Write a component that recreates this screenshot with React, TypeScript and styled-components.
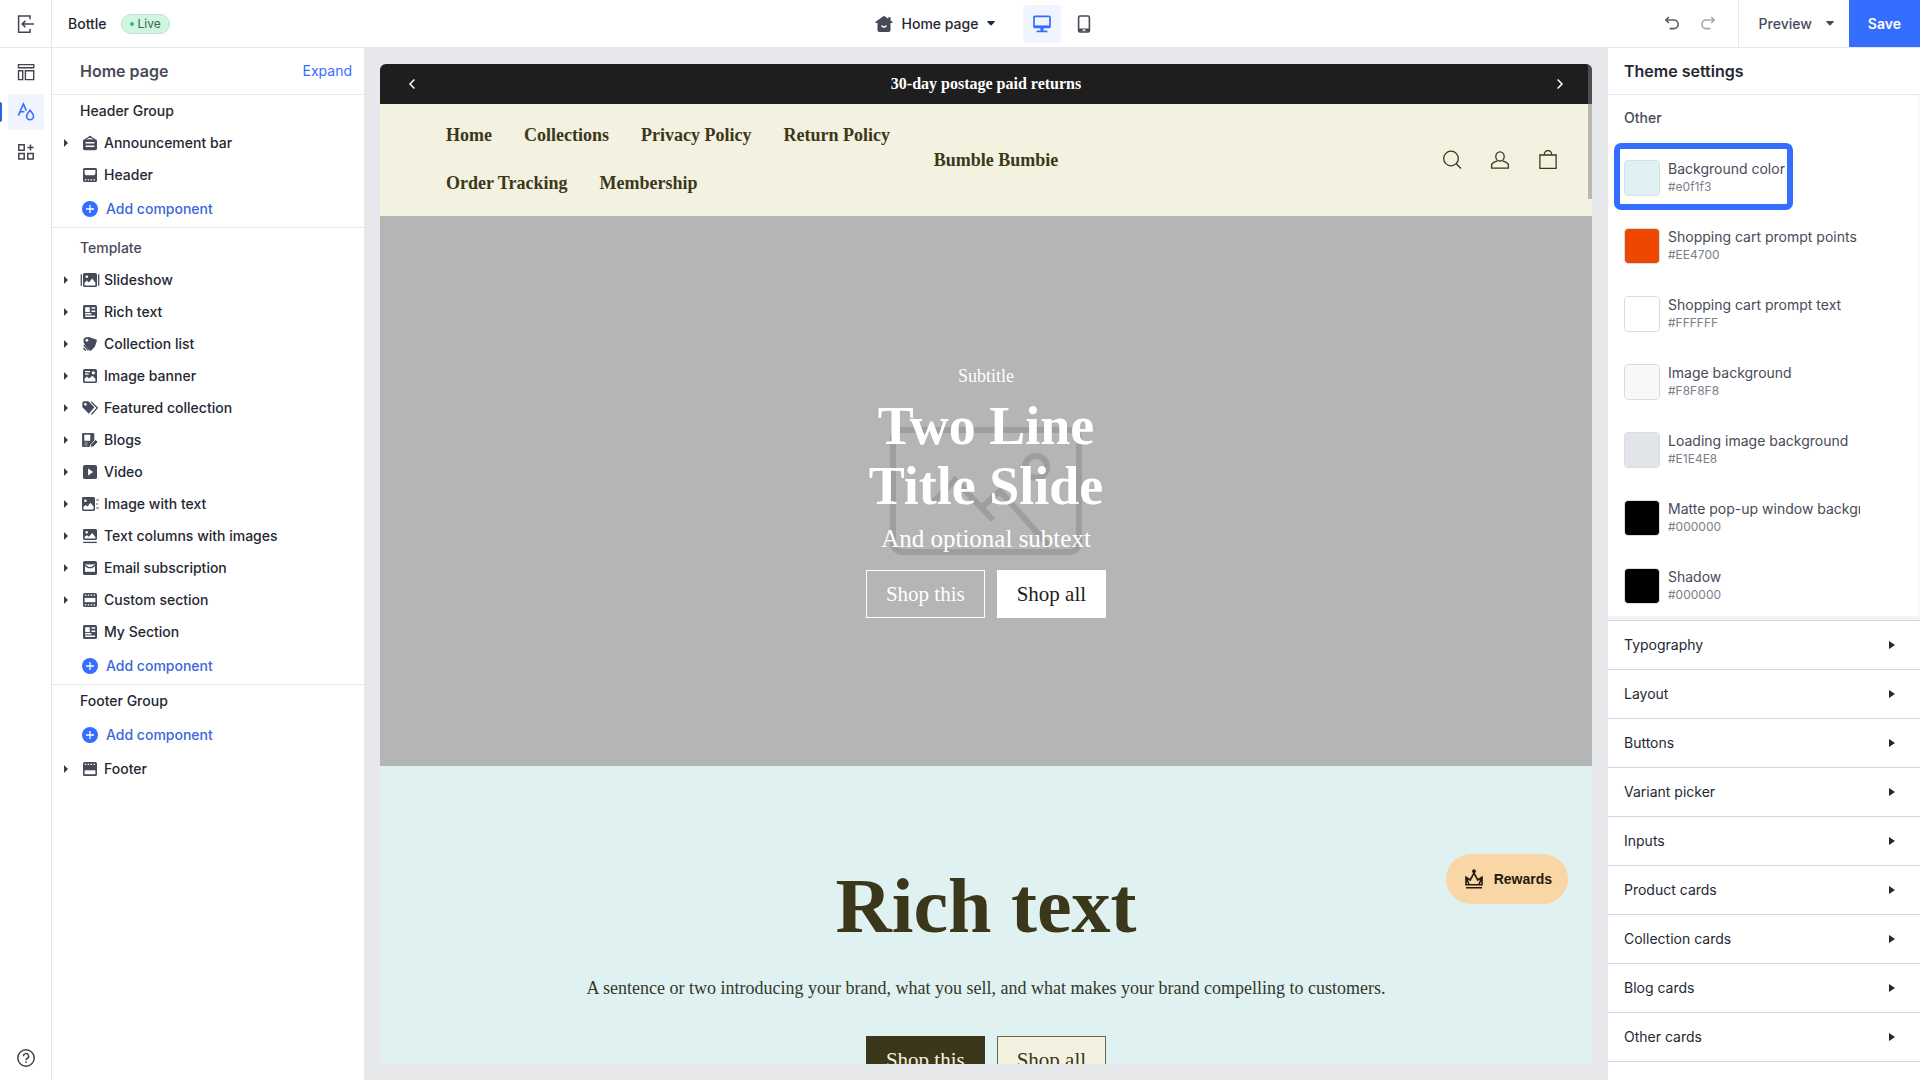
import React from "react";
import styled, { createGlobalStyle, css } from "styled-components";

const sans = `Inter, "Liberation Sans", sans-serif`;
const serif = `"Liberation Serif", "Times New Roman", serif`;
const ink = "#242833";
const slate = "#474b59";
const blue = "#356dff";
const line = "#e5e7ea";
const olive = "#3b371b";

const GlobalStyle = createGlobalStyle`
  *, *::before, *::after { box-sizing: border-box; }
  body { margin: 0; font-family: ${sans}; font-size: 14px; line-height: 20px; color: ${ink}; background: #fff; }
  h1, h2, h3, p, ul { margin: 0; padding: 0; }
  ul { list-style: none; }
  a { color: inherit; text-decoration: none; }
  button, select, input { font: inherit; color: inherit; margin: 0; }
  button { border: 0; background: none; padding: 0; cursor: pointer; }
  svg { display: block; flex: none; }
`;

const Shell = styled.div`
  display: grid;
  grid-template-columns: 52px 1fr;
  height: 100vh;
  overflow: hidden;
`;

/* Left rail */
const Rail = styled.nav`
  display: flex;
  flex-direction: column;
  align-items: center;
  border-right: 1px solid ${line};
  color: #42454e;
`;
const RailExit = styled.button`
  display: grid;
  place-items: center;
  width: 100%;
  height: 48px;
  border-bottom: 1px solid ${line};
`;
const RailList = styled.div`
  display: flex;
  flex-direction: column;
  gap: 4px;
  width: 100%;
  padding: 6px 0 0 8px;
  flex: 1;
`;
const RailButton = styled.button<{ $active?: boolean }>`
  position: relative;
  display: grid;
  place-items: center;
  width: 36px;
  height: 36px;
  border-radius: 4px;
  ${(p) =>
    p.$active &&
    css`
      background: #f0f4ff;
      color: ${blue};
      &::before {
        content: "";
        position: absolute;
        left: -8px;
        top: 8px;
        width: 2px;
        height: 20px;
        background: #2f5fe8;
        border-radius: 0 2px 2px 0;
      }
    `}
`;
const RailFooter = styled.div`
  padding-bottom: 4px;
`;

/* Top bar */
const Main = styled.div`
  display: flex;
  flex-direction: column;
  min-width: 0;
  min-height: 0;
`;
const TopBar = styled.header`
  display: grid;
  grid-template-columns: 1fr auto 1fr;
  align-items: center;
  height: 48px;
  flex: none;
  border-bottom: 1px solid ${line};
  font-weight: 500;
`;
const ThemeName = styled.div`
  display: flex;
  align-items: center;
  gap: 14px;
  padding-left: 16px;
`;
const LiveBadge = styled.span`
  display: flex;
  align-items: center;
  gap: 4px;
  height: 20px;
  padding: 0 8px;
  border: 1px solid #b9e6cc;
  border-radius: 10px;
  background: #d0f6df;
  color: #41625a;
  font-size: 12px;
  font-weight: 400;
  &::before {
    content: "";
    width: 4px;
    height: 4px;
    border-radius: 50%;
    background: #3fb27c;
  }
`;
const Center = styled.div`
  display: flex;
  align-items: center;
  gap: 4px;
  padding-left: 4px;
`;
const PagePicker = styled.label`
  display: flex;
  align-items: center;
  gap: 8px;
  margin-right: 24px;
`;
const PageSelect = styled.select`
  appearance: none;
  border: 0;
  background: none;
  padding: 0;
  font-weight: 500;
`;
const Device = styled.button<{ $active?: boolean }>`
  display: grid;
  place-items: center;
  width: 38px;
  height: 38px;
  border-radius: 4px;
  color: ${(p) => (p.$active ? blue : slate)};
  background: ${(p) => (p.$active ? "#f0f4ff" : "transparent")};
`;
const Actions = styled.div`
  display: flex;
  justify-content: flex-end;
  align-items: stretch;
  height: 47px;
`;
const History = styled.div`
  display: flex;
  align-items: center;
  gap: 16px;
  padding-right: 20px;
  color: #5a5d66;
`;
const IconButton = styled.button`
  display: grid;
  place-items: center;
  &:disabled { color: #a4a7ae; }
`;
const Preview = styled.button`
  display: flex;
  align-items: center;
  gap: 14px;
  padding: 0 15px 0 20px;
  border-left: 1px solid ${line};
  color: ${slate};
  font-weight: 500;
`;
const Save = styled.button`
  padding: 0 19px;
  background: ${blue};
  color: #fff;
  font-weight: 600;
`;

const Workspace = styled.div`
  display: grid;
  grid-template-columns: 312px 1fr 312px;
  flex: 1;
  min-height: 0;
`;

/* Component tree */
const Tree = styled.aside`
  min-height: 0;
  overflow: hidden;
`;
const PanelHead = styled.div`
  display: flex;
  align-items: center;
  justify-content: space-between;
  height: 47px;
  padding: 0 12px 0 28px;
  border-bottom: 1px solid ${line};
`;
const TreeTitle = styled.h2`
  font-size: 16px;
  font-weight: 600;
  color: ${slate};
`;
const Expand = styled.button`
  color: ${blue};
`;
const Group = styled.section<{ $spaced?: boolean }>`
  padding-top: ${(p) => (p.$spaced ? 4 : 0)}px;
  & + & { border-top: 1px solid ${line}; }
`;
const GroupTitle = styled.h3<{ $muted?: boolean }>`
  padding-left: 28px;
  font-size: 14px;
  line-height: 32px;
  font-weight: 500;
  color: ${(p) => (p.$muted ? slate : ink)};
`;
const Row = styled.button`
  display: flex;
  align-items: center;
  gap: 8px;
  width: 100%;
  height: 32px;
  padding-left: 8px;
  font-weight: 500;
  text-align: left;
  color: ${ink};
`;
const CaretSlot = styled.span`
  display: grid;
  place-items: center;
  width: 12px;
  color: #3a3d47;
`;
const RowLabel = styled.span`
  display: flex;
  align-items: center;
  gap: 4px;
`;
const Add = styled.button`
  display: flex;
  align-items: center;
  gap: 6px;
  height: 36px;
  padding-left: 28px;
  color: #3b67dc;
  font-weight: 500;
`;

/* Shop preview */
const Canvas = styled.main`
  min-width: 0;
  min-height: 0;
  padding: 16px;
  background: #e6e8ec;
`;
const Frame = styled.div`
  position: relative;
  height: 100%;
  overflow: hidden;
  border-radius: 6px;
  background: #e0f1f1;
  font-family: ${serif};
`;
const ScrollThumb = styled.div`
  position: absolute;
  top: 0;
  right: 0;
  width: 4px;
  height: 135px;
  background: rgba(128, 128, 128, 0.5);
`;
const Announcement = styled.div`
  display: flex;
  align-items: center;
  justify-content: space-between;
  height: 40px;
  padding: 0 24px;
  background: #1e1e1e;
  color: #fff;
  font-size: 16px;
  font-weight: 700;
`;
const ShopHeader = styled.div`
  display: grid;
  grid-template-columns: 1fr auto 1fr;
  align-items: center;
  height: 112px;
  padding: 0 20px 0 40px;
  background: #f3f1df;
  color: ${olive};
  font-size: 18px;
  font-weight: 700;
`;
const ShopNav = styled.ul`
  display: flex;
  flex-wrap: wrap;
  column-gap: 32px;
  padding: 0 0 2px 26px;
  line-height: 48px;
`;
const ShopTools = styled.div`
  display: flex;
  justify-content: flex-end;
`;
const Tool = styled.button`
  display: grid;
  place-items: center;
  width: 48px;
  height: 48px;
`;
const Hero = styled.section`
  position: relative;
  display: flex;
  align-items: center;
  justify-content: center;
  height: 550px;
  background: #b5b5b5;
  color: #fff;
`;
const Placeholder = styled.svg`
  position: absolute;
  top: 50%;
  left: 50%;
  transform: translate(-50%, -50%);
`;
const HeroText = styled.div`
  position: relative;
  display: flex;
  flex-direction: column;
  align-items: center;
  gap: 8px;
  text-align: center;
`;
const Subtitle = styled.p`
  font-size: 18px;
  line-height: 24px;
`;
const HeroTitle = styled.h1`
  max-width: 300px;
  font-size: 54px;
  line-height: 60px;
`;
const Subtext = styled.p`
  font-size: 25px;
  line-height: 30px;
  padding-bottom: 8px;
`;
const ButtonRow = styled.div`
  display: flex;
  justify-content: center;
  gap: 12px;
`;
const tones = {
  outline: css`border-color: #fff; color: #fff;`,
  white: css`border-color: #fff; background: #fff; color: #1e1e1e;`,
  dark: css`border-color: ${olive}; background: ${olive}; color: #f3f1df;`,
  cream: css`border-color: #6b6850; background: #f3f1df; color: ${olive};`,
};
const ShopButton = styled.a<{ $tone: keyof typeof tones }>`
  height: 48px;
  padding: 0 19px;
  border: 1px solid;
  font-size: 21px;
  line-height: 46px;
  ${(p) => tones[p.$tone]}
`;
const Rich = styled.section`
  padding: 92px 40px;
  text-align: center;
  color: ${olive};
`;
const RichTitle = styled.h2`
  font-size: 78px;
  line-height: 96px;
`;
const RichBody = styled.p`
  padding: 20px 0 34px;
  font-size: 18px;
  line-height: 28px;
  color: #34382a;
`;
const Rewards = styled.button`
  position: absolute;
  right: 24px;
  bottom: 160px;
  display: flex;
  align-items: center;
  gap: 10px;
  height: 50px;
  padding: 0 16px 0 18px;
  border-radius: 25px;
  background: #f9d6a5;
  color: #251a0b;
  font-family: "Liberation Sans", Arial, sans-serif;
  font-size: 14px;
  font-weight: 700;
`;

/* Settings panel */
const Settings = styled.aside`
  min-height: 0;
  overflow: hidden;
`;
const SettingsTitle = styled.h2`
  padding-left: 16px;
  height: 47px;
  font-size: 16px;
  line-height: 46px;
  font-weight: 600;
  border-bottom: 1px solid ${line};
`;
const ColorSection = styled.section`
  border-right: 2px solid #f8f8f8;
  border-bottom: 4px solid #f3f3f4;
  padding: 13px 0 8px 16px;
`;
const SectionName = styled.h3`
  font-size: 14px;
  line-height: 20px;
  font-weight: 500;
  color: ${slate};
`;
const ColorItem = styled.div<{ $picked?: boolean }>`
  position: relative;
  display: flex;
  align-items: center;
  gap: 8px;
  width: fit-content;
  height: 36px;
  margin: 32px 0;
  ${(p) =>
    p.$picked &&
    css`
      &::after {
        content: "";
        position: absolute;
        inset: -17px -8px -14px -10px;
        border: 6px solid ${blue};
        border-radius: 7px;
        pointer-events: none;
      }
    `}
  &:last-child { margin-bottom: 4px; }
`;
const Swatch = styled.input`
  appearance: none;
  flex: none;
  width: 36px;
  height: 36px;
  padding: 0;
  border: 1px solid #d9dde3;
  border-radius: 4px;
  background: none;
  overflow: hidden;
  cursor: pointer;
  &::-webkit-color-swatch-wrapper { padding: 0; }
  &::-webkit-color-swatch { border: 0; border-radius: 2px; }
`;
const ColorText = styled.div`
  max-width: 192px;
  overflow: hidden;
  white-space: nowrap;
`;
const ColorName = styled.label`
  display: block;
  line-height: 18px;
  color: ${slate};
`;
const Hex = styled.div`
  font-size: 12px;
  line-height: 18px;
  color: #7a7e89;
`;
const Fold = styled.button`
  display: flex;
  align-items: center;
  justify-content: space-between;
  width: 100%;
  height: 49px;
  padding: 0 25px 0 16px;
  border-top: 1px solid #d5d7dc;
`;
const FoldList = styled.div`
  border-bottom: 1px solid #d5d7dc;
`;

/* Icons */
const CaretRight = ({ width = 4 }: { width?: number }) => (
  <svg
    width={width}
    height="8"
    viewBox="0 0 4 8"
    preserveAspectRatio="none"
    fill="currentColor"
    aria-hidden="true"
  >
    <path d="M0 0 4 4 0 8z" />
  </svg>
);
const CaretDown = () => (
  <svg width="8" height="5" viewBox="0 0 8 5" fill="currentColor" aria-hidden="true">
    <path d="M.7 0h6.6a.6.6 0 0 1 .4 1L4.5 4.3a.7.7 0 0 1-1 0L.3 1A.6.6 0 0 1 .7 0z" />
  </svg>
);
const Glyph = ({ children, size = 20, w = 1.5 }: { children: React.ReactNode; size?: number; w?: number }) => (
  <svg width={size} height={size} viewBox="0 0 20 20" fill="none" stroke="currentColor" strokeWidth={w} aria-hidden="true">
    {children}
  </svg>
);

const D = slate;
const tile = <rect x="3" y="3" width="14" height="14" rx="1.6" fill={D} />;
const textBlocks = (
  <>
    {tile}
    <path d="M5.2 5.2h4.6v4.9H5.2z" fill="#fff" />
    <path d="M11.6 6h3.6M11.6 9.3h3.6M5.2 11.8h6M5.2 14.3h9.8" stroke="#fff" strokeWidth="1.4" />
  </>
);
const treeIcons: Record<string, React.ReactNode> = {
  announcement: (
    <>
      <rect x="3" y="6.3" width="14" height="10.9" rx="1.6" fill={D} />
      <path d="m5 6.600 5-3 5 3" stroke={D} strokeWidth="1.2" />
      <circle cx="10" cy="3.9" r="1.2" fill={D} />
      <path d="M5.6 9.800h8.800M5.600 13.300h8.800" stroke="#fff" strokeWidth="1.5" />
    </>
  ),
  header: (
    <>
      {tile}
      <path d="M4.6 4.9h10.8v4.200l-1.200 1.200H5.800L4.600 9.100z" fill="#fff" />
      <path d="M4.800 14.800h10.800" stroke="#fff" strokeWidth="1.2" strokeDasharray="1.5 1.400" />
    </>
  ),
  slideshow: (
    <>
      {tile}
      <path d="M1.3 4.2v11.6M18.7 4.2v11.6" stroke={D} strokeWidth="1.3" />
      <circle cx="6.8" cy="6.8" r="1.3" fill="#fff" />
      <path d="M4.6 15.4v-2.6l2.3-2.2 2 2 3.4-4 3.1 4.2v2.6z" fill="#fff" />
    </>
  ),
  rich: textBlocks,
  collection: (
    <>
      <path d="M3.400 5.400 5 3.600 9.400 3l1.600.8 5.900 2-.5 2.800-1.600 4.200-3.500 3.800-1.500.2-3.600-4-2.400-4z" fill={D} />
      <circle cx="6.9" cy="6.300" r="1.4" fill="#fff" />
      <path d="m3.8 11 4.700 5.400M3.400 14l2.4 2.8" stroke={D} strokeWidth="1.4" />
    </>
  ),
  banner: (
    <>
      {tile}
      <path d="M5 5.6h5M5 8.1h3.6" stroke="#fff" strokeWidth="1.3" />
      <circle cx="13.4" cy="6.8" r="1.6" fill="#fff" />
      <path d="M4.6 15.4v-3l2.4-1.8 2 1.9 3.4-2.7 3 3v2.6z" fill="#fff" />
    </>
  ),
  featured: (
    <>
      <path d="M2.4 4.6 3.8 3.2h4.6l6 6.1-5.6 6.4-6.4-6.5z" fill={D} />
      <circle cx="5.4" cy="6.2" r="1.3" fill="#fff" />
      <path d="m11 3.6 6.3 6.3-5.9 6.6" stroke={D} strokeWidth="1.3" />
    </>
  ),
  blogs: (
    <>
      <path d="M2.6 3.6h11.2v7.2l-4.4 5.6H2.6z" fill={D} stroke={D} strokeWidth="1" strokeLinejoin="round" />
      <path d="M4.600 5h5.400v5.600H4.600zM4.4 13h3.200M4.400 15h3.200" fill="#fff" stroke="#fff" strokeWidth=".6" />
      <path d="M10.6 17.2v-2.6l5-5 2.4 2.4-5 5z" fill={D} stroke="#fff" strokeWidth=".8" />
    </>
  ),
  video: (
    <>
      {tile}
      <path d="m8 6.6 5.2 3.4L8 13.4z" fill="#fff" />
    </>
  ),
  imageText: (
    <>
      <rect x="2" y="3" width="13" height="14" rx="1.4" fill={D} />
      <circle cx="5.4" cy="6.8" r="1.3" fill="#fff" />
      <path d="M3.4 15.4v-2.6L5.7 11l1.8 1.6 3-3.8 3 3.6v3z" fill="#fff" />
      <path d="M16.2 6h2.7M16.2 10h1.7M16.2 14h2.7" stroke={D} strokeWidth="1.2" />
    </>
  ),
  columns: (
    <>
      <rect x="3" y="3" width="14" height="11" rx="1.4" fill={D} />
      <circle cx="6.7" cy="6.2" r="1.2" fill="#fff" />
      <path d="M4.6 12.4v-1.7l2.2-1.5 2 1.6 3.4-3.9 3.2 4v1.5z" fill="#fff" />
      <path d="M3.2 16.4h13.6" stroke={D} strokeWidth="1.3" />
    </>
  ),
  email: (
    <>
      {tile}
      <path d="M5 6.4h10v7.4H5z" fill="#fff" />
      <path d="m5 7.4 3.4 2.2h3.2L15 7.4" stroke={D} strokeWidth="1.4" />
    </>
  ),
  custom: (
    <>
      {tile}
      <path d="M4.6 7.9h10.8v4.3H4.6z" fill="#fff" />
      <path d="M4.800 5.2h10.800M4.800 14.9h10.800" stroke="#fff" strokeWidth="1.2" strokeDasharray="1.5 1.400" />
    </>
  ),
  footer: (
    <>
      {tile}
      <path d="M4.6 11.3h10.8v3.9H4.6z" fill="#fff" />
      <path d="M4.800 5.4h10.800" stroke="#fff" strokeWidth="1.2" strokeDasharray="1.5 1.400" />
    </>
  ),
};

const PlusDot = () => (
  <svg width="20" height="20" viewBox="0 0 20 20" aria-hidden="true">
    <circle cx="10" cy="10" r="8" fill={blue} />
    <path d="M10 6v8M6 10h8" stroke="#fff" strokeWidth="1.3" />
  </svg>
);

type TreeNode = { label: string; icon: string; leaf?: boolean };
const headerNodes: TreeNode[] = [
  { label: "Announcement bar", icon: "announcement" },
  { label: "Header", icon: "header", leaf: true },
];
const templateNodes: TreeNode[] = [
  { label: "Slideshow", icon: "slideshow" },
  { label: "Rich text", icon: "rich" },
  { label: "Collection list", icon: "collection" },
  { label: "Image banner", icon: "banner" },
  { label: "Featured collection", icon: "featured" },
  { label: "Blogs", icon: "blogs" },
  { label: "Video", icon: "video" },
  { label: "Image with text", icon: "imageText" },
  { label: "Text columns with images", icon: "columns" },
  { label: "Email subscription", icon: "email" },
  { label: "Custom section", icon: "custom" },
  { label: "My Section", icon: "rich", leaf: true },
];
const footerNodes: TreeNode[] = [{ label: "Footer", icon: "footer" }];

const colors = [
  { name: "Background color", hex: "#e0f1f3" },
  { name: "Shopping cart prompt points", hex: "#EE4700" },
  { name: "Shopping cart prompt text", hex: "#FFFFFF" },
  { name: "Image background", hex: "#F8F8F8" },
  { name: "Loading image background", hex: "#E1E4E8" },
  { name: "Matte pop-up window background", hex: "#000000" },
  { name: "Shadow", hex: "#000000" },
];
const folds = [
  "Typography",
  "Layout",
  "Buttons",
  "Variant picker",
  "Inputs",
  "Product cards",
  "Collection cards",
  "Blog cards",
  "Other cards",
];
const links = ["Home", "Collections", "Privacy Policy", "Return Policy", "Order Tracking", "Membership"];

const Nodes = ({ items }: { items: TreeNode[] }) => (
  <>
    {items.map((n) => (
      <Row key={n.label} type="button">
        <CaretSlot>{!n.leaf && <CaretRight />}</CaretSlot>
        <RowLabel>
          <Glyph>
            <g stroke="none">{treeIcons[n.icon]}</g>
          </Glyph>
          {n.label}
        </RowLabel>
      </Row>
    ))}
  </>
);
const AddComponent = () => (
  <Add type="button">
    <PlusDot />
    Add component
  </Add>
);

export default function App() {
  return (
    <Shell>
      <GlobalStyle />
      <Rail>
        <RailExit type="button" aria-label="Exit">
          <Glyph>
            <path d="M14 5.2V1.9H2.6v16.3H14v-3.3M18 10H6.2M9.4 6.9 6.2 10l3.2 3.1" />
          </Glyph>
        </RailExit>
        <RailList>
          <RailButton type="button" aria-label="Templates">
            <Glyph w={1.4}>
              <path d="M2.5 2.6h15.2v3.2H2.5zM2.5 8.7h4.2v8.9H2.5zM9.4 8.7h8.3v8.9H9.4z" />
            </Glyph>
          </RailButton>
          <RailButton type="button" aria-label="Theme" $active>
            <Glyph w={1.6}>
              <path d="M2.4 13.6 7.4 2l2.9 6.6M4.2 9.8h4.2" />
              <path d="M14 8.2c-2 2.5-3.4 4.2-3.4 6.1a3.4 3.4 0 0 0 6.9 0c0-1.9-1.4-3.6-3.5-6.1z" />
            </Glyph>
          </RailButton>
          <RailButton type="button" aria-label="Apps">
            <Glyph w={1.5}>
              <path d="M2.8 2.8h5.4v5.4H2.800zM2.800 11.600h5.400v5.400H2.800zM11.800 11.600h5.400v5.400h-5.400zM14.500 2.400v6.200M11.400 5.500h6.200" />
            </Glyph>
          </RailButton>
        </RailList>
        <RailFooter>
          <RailButton type="button" aria-label="Help">
            <Glyph>
              <circle cx="10" cy="10" r="8.2" />
              <path d="M7.4 8.2a2.6 2.6 0 1 1 3.8 2.3c-.8.4-1.2.8-1.2 1.7M10 13.4v1.6" />
            </Glyph>
          </RailButton>
        </RailFooter>
      </Rail>

      <Main>
        <TopBar>
          <ThemeName>
            <span>Bottle</span>
            <LiveBadge>Live</LiveBadge>
          </ThemeName>
          <Center>
            <PagePicker>
              <svg width="20" height="20" viewBox="0 0 20 20" aria-hidden="true">
                <path
                  d="M10 1.8 1.2 8.1l.6 1H3.5v7.2A1.7 1.7 0 0 0 5.2 18h9.6a1.7 1.7 0 0 0 1.7-1.7V9.1h1.7l.6-1L16.600 6.500V3.300h-2.400v1.500z"
                  fill={slate}
                />
                <path d="M7.7 11.4c.5 2.2 4.1 2.2 4.6 0" fill="none" stroke="#fff" strokeWidth="1.4" />
              </svg>
              <PageSelect aria-label="Page">
                <option>Home page</option>
              </PageSelect>
              <CaretDown />
            </PagePicker>
            <Device type="button" aria-label="Desktop" $active>
              <Glyph w={1.7}>
                <rect x="2" y="2.4" width="16" height="11" rx="1" />
                <path d="M2 12.400h16" strokeWidth="2" />
                <path d="M10 13v4" strokeWidth="3" />
                <path d="M4.6 17.4h10.8" />
              </Glyph>
            </Device>
            <Device type="button" aria-label="Mobile">
              <Glyph w={1.6}>
                <rect x="4.6" y="2" width="10.8" height="16" rx="1.5" />
                <path d="M4.6 16h10.800" strokeWidth="3" />
                <path d="M8.6 16.200h2.800" stroke="#fff" strokeWidth="1.4" />
              </Glyph>
            </Device>
          </Center>
          <Actions>
            <History>
              <IconButton type="button" aria-label="Undo">
                <Glyph w={1.6}>
                  <path d="M3.800 6h8a4.300 4.300 0 0 1 0 8.600H7.600M6.800 3 3.800 6l3 3" />
                </Glyph>
              </IconButton>
              <IconButton type="button" aria-label="Redo" disabled>
                <Glyph w={1.6}>
                  <path d="M16.200 6h-8a4.300 4.300 0 0 0 0 8.600h4.200M13.200 3l3 3-3 3" />
                </Glyph>
              </IconButton>
            </History>
            <Preview type="button">
              Preview
              <CaretDown />
            </Preview>
            <Save type="button">Save</Save>
          </Actions>
        </TopBar>

        <Workspace>
          <Tree>
            <PanelHead>
              <TreeTitle>Home page</TreeTitle>
              <Expand type="button">Expand</Expand>
            </PanelHead>
            <Group>
              <GroupTitle>Header Group</GroupTitle>
              <Nodes items={headerNodes} />
              <AddComponent />
            </Group>
            <Group $spaced>
              <GroupTitle $muted>Template</GroupTitle>
              <Nodes items={templateNodes} />
              <AddComponent />
            </Group>
            <Group>
              <GroupTitle>Footer Group</GroupTitle>
              <AddComponent />
              <Nodes items={footerNodes} />
            </Group>
          </Tree>

          <Canvas>
            <Frame>
              <Announcement>
                <IconButton type="button" aria-label="Previous announcement">
                  <svg width="16" height="16" viewBox="0 0 16 16" fill="none" stroke="currentColor" strokeWidth="1.5">
                    <path d="M10.400 3.500 6 8l4.400 4.500" />
                  </svg>
                </IconButton>
                <p>30-day postage paid returns</p>
                <IconButton type="button" aria-label="Next announcement">
                  <svg width="16" height="16" viewBox="0 0 16 16" fill="none" stroke="currentColor" strokeWidth="1.5">
                    <path d="M5.600 3.500 10 8l-4.400 4.500" />
                  </svg>
                </IconButton>
              </Announcement>
              <ShopHeader>
                <ShopNav>
                  {links.map((l) => (
                    <li key={l}>
                      <a href="#">{l}</a>
                    </li>
                  ))}
                </ShopNav>
                <a href="#">Bumble Bumbie</a>
                <ShopTools>
                  <Tool type="button" aria-label="Search">
                    <Glyph w={1.3}>
                      <circle cx="9" cy="8.5" r="7.3" />
                      <path d="m14.2 13.7 4.8 4.8" />
                    </Glyph>
                  </Tool>
                  <Tool type="button" aria-label="Account">
                    <Glyph w={1.3}>
                      <ellipse cx="10" cy="6.4" rx="4.2" ry="4.6" />
                      <path d="M7.6 10.800c-3 .9-5.400 2.400-6 3.700v3.700h16.800v-3.700c-.6-1.300-3-2.800-6-3.700" />
                    </Glyph>
                  </Tool>
                  <Tool type="button" aria-label="Cart">
                    <Glyph w={1.3}>
                      <path d="M1.900 5h16.200v13.400H1.900zM6.200 5c0-6 7.600-6 7.600 0" />
                    </Glyph>
                  </Tool>
                </ShopTools>
              </ShopHeader>
              <Hero>
                <Placeholder width="192" height="128" viewBox="0 0 192 128" fill="none" stroke="#9e9e9e" strokeWidth="6">
                  <rect x="3" y="3" width="186" height="122" rx="9" />
                  <circle cx="146" cy="40" r="11" />
                  <path d="m43 75 22-22 38 40M90 82l20-18 50 56" />
                </Placeholder>
                <HeroText>
                  <Subtitle>Subtitle</Subtitle>
                  <HeroTitle>Two Line Title Slide</HeroTitle>
                  <Subtext>And optional subtext</Subtext>
                  <ButtonRow>
                    <ShopButton href="#" $tone="outline">Shop this</ShopButton>
                    <ShopButton href="#" $tone="white">Shop all</ShopButton>
                  </ButtonRow>
                </HeroText>
              </Hero>
              <Rich>
                <RichTitle>Rich text</RichTitle>
                <RichBody>
                  A sentence or two introducing your brand, what you sell, and what makes your brand compelling to customers.
                </RichBody>
                <ButtonRow>
                  <ShopButton href="#" $tone="dark">Shop this</ShopButton>
                  <ShopButton href="#" $tone="cream">Shop all</ShopButton>
                </ButtonRow>
              </Rich>
              <Rewards type="button">
                <Glyph w={1.6}>
                  <path d="M10 4.200 6.200 11 2 8.300v7.400h16V8.300L13.800 11zM2 8.300l3.200 7.400M18 8.300l-3.200 7.400M2 18.800h16" />
                  <circle cx="10" cy="2.200" r="1.900" fill="currentColor" stroke="none" />
                </Glyph>
                Rewards
              </Rewards>
              <ScrollThumb />
            </Frame>
          </Canvas>

          <Settings>
            <SettingsTitle>Theme settings</SettingsTitle>
            <ColorSection>
              <SectionName>Other</SectionName>
              {colors.map((c, i) => (
                <ColorItem key={c.name} $picked={i === 0}>
                  <Swatch type="color" id={`color-${i}`} defaultValue={c.hex.toLowerCase()} />
                  <ColorText>
                    <ColorName htmlFor={`color-${i}`}>{c.name}</ColorName>
                    <Hex>{c.hex}</Hex>
                  </ColorText>
                </ColorItem>
              ))}
            </ColorSection>
            <FoldList>
              {folds.map((f) => (
                <Fold key={f} type="button">
                  {f}
                  <CaretRight width={6} />
                </Fold>
              ))}
            </FoldList>
          </Settings>
        </Workspace>
      </Main>
    </Shell>
  );
}
